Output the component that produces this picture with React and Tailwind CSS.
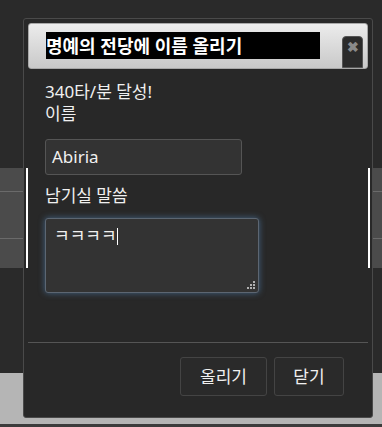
import React from "react";

const font = { fontFamily: '"Noto Sans", "Noto Sans CJK KR", sans-serif' };

const Backdrop = () => (
  <div className="flex h-full flex-col">
    <div className="h-[168px] shrink-0" />
    <div className="flex h-[100px] shrink-0 flex-col bg-[#4b4b4b]">
      <div className="h-[24px] border-b border-[#6a6a6a]" />
      <div className="h-[47px] border-b border-[#6a6a6a]" />
      <div className="flex-1" />
    </div>
    <div className="h-[105px] shrink-0" />
    <div className="h-[51px] shrink-0 bg-[#b5b5b5]" />
    <div className="flex-1 bg-[#3c3c3c]" />
  </div>
);

const ResizeGrip = () => (
  <svg width="8" height="8" viewBox="0 0 8 8" className="absolute bottom-[3px] right-[3px]">
    <rect x="6" y="0" width="2" height="2" fill="#b0b0b0" />
    <rect x="3" y="3" width="2" height="2" fill="#b0b0b0" />
    <rect x="6" y="3" width="2" height="2" fill="#b0b0b0" />
    <rect x="0" y="6" width="2" height="2" fill="#b0b0b0" />
    <rect x="3" y="6" width="2" height="2" fill="#b0b0b0" />
    <rect x="6" y="6" width="2" height="2" fill="#b0b0b0" />
  </svg>
);

const App = () => {
  return (
    <div className="relative h-[427px] w-[382px] overflow-hidden bg-[#2a2a2a]" style={font}>
      <Backdrop />

      {/* dialog */}
      <div className="absolute left-[23px] top-[18px] flex h-[400px] w-[350px] flex-col rounded-[3px] border border-[#4a4a4a] bg-[#282828] p-[4px] text-[#f0f0f0]">
        <div className="relative h-[46px] shrink-0 rounded-[3px] border border-[#a8a8a8] bg-gradient-to-b from-[#ececec] to-[#c9c9c9] pl-[17px] pt-[8px]">
          <div className="flex h-[27px] w-[274px] items-center bg-black text-[18px] font-bold leading-none text-white">
            명예의 전당에 이름 올리기
          </div>
          <button className="absolute left-[313px] top-[12px] flex h-[32px] w-[21px] justify-center rounded-t-[4px] border border-[#555] bg-[#2b2b2b] pt-[3px] text-[14px] font-bold leading-none text-[#8a8a8a]">
            ✖
          </button>
        </div>

        <div className="flex flex-1 flex-col pl-[17px] pt-[12px] text-[17px]">
          <p className="leading-[22px]">340타/분 달성!</p>
          <p className="leading-[22px]">이름</p>
          <div className="mt-[14px] flex h-[36px] w-[197px] items-center rounded-[3px] border border-[#555] bg-[#333] pl-[6px]">
            Abiria
          </div>
          <p className="mt-[10px] leading-[22px]">남기실 말씀</p>
          <div className="relative mt-[11px] h-[75px] w-[214px] rounded-[3px] border border-[#5c6672] bg-[#333] pl-[8px] pt-[6px] leading-[20px] shadow-[0_0_6px_rgba(90,150,210,0.55)]">
            <span>ㅋㅋㅋㅋ</span>
            <span className="inline-block h-[17px] w-px translate-y-[3px] bg-white" />
            <ResizeGrip />
          </div>
        </div>

        <div className="h-px shrink-0 bg-[#555]" />
        <div className="flex h-[70px] shrink-0 justify-end gap-[7px] pr-[24px] pt-[14px] text-[17px]">
          <button className="h-[39px] w-[87px] rounded-[3px] border border-[#444] bg-[#2a2a2a] text-[#f0f0f0]">
            올리기
          </button>
          <button className="h-[39px] w-[70px] rounded-[3px] border border-[#444] bg-[#2a2a2a] text-[#f0f0f0]">
            닫기
          </button>
        </div>
      </div>

      {/* stray white edges showing through */}
      <div className="absolute left-[26px] top-[168px] h-[100px] w-[2px] bg-white" />
      <div className="absolute left-[368px] top-[168px] h-[100px] w-[2px] bg-white" />
    </div>
  );
};

export default App;
